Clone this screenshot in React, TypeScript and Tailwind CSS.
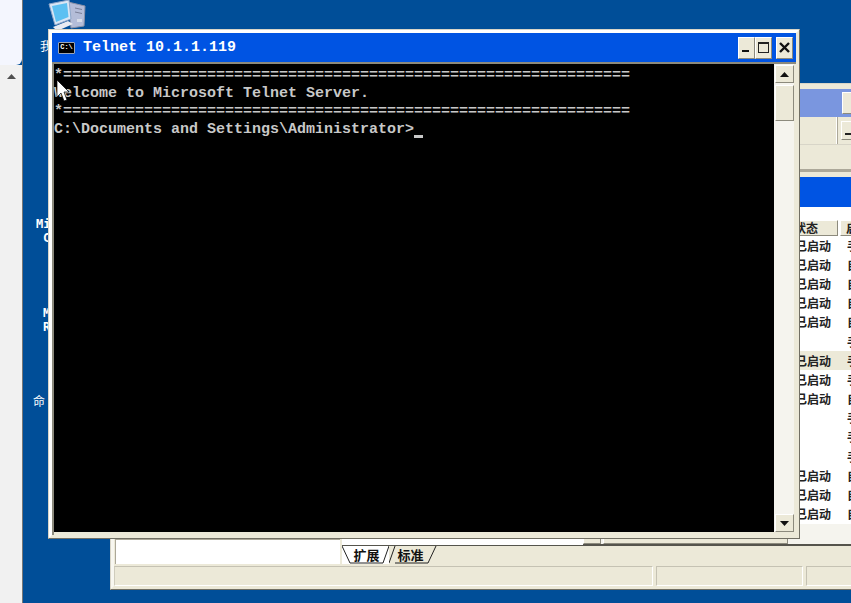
const rowsData = [
  ["已启动", "手动"],
  ["已启动", "自动"],
  ["已启动", "自动"],
  ["已启动", "自动"],
  ["已启动", "自动"],
  ["", "手动"],
  ["已启动", "手动"],
  ["已启动", "手动"],
  ["已启动", "自动"],
  ["", "手动"],
  ["", "手动"],
  ["", "手动"],
  ["已启动", "自动"],
  ["已启动", "自动"],
  ["已启动", "自动"],
];

const bevel =
  "border border-t-white border-l-white border-r-[#8c8a7d] border-b-[#8c8a7d] bg-[#ece9d8]";

function CaptionButton({ kind }: { kind: "min" | "max" | "close" }) {
  return (
    <div className={`${bevel} flex h-[22px] w-[17px] items-center justify-center`}>
      <svg width="13" height="13" viewBox="0 0 13 13">
        {kind === "min" && <rect x="2" y="9" width="7" height="2" fill="#111" />}
        {kind === "max" && (
          <path d="M1 1h11v11H1zM2 3v8h9V3z" fill="#222" fillRule="evenodd" />
        )}
        {kind === "close" && (
          <path d="M2 2l9 9M11 2l-9 9" stroke="#111" strokeWidth="2.4" fill="none" />
        )}
      </svg>
    </div>
  );
}

function ScrollButton({ up }: { up: boolean }) {
  return (
    <div className={`${bevel} flex h-[18px] w-full items-center justify-center`}>
      <svg width="9" height="5" viewBox="0 0 9 5">
        <path d={up ? "M4.5 0L9 5H0z" : "M0 0h9L4.5 5z"} fill="#111" />
      </svg>
    </div>
  );
}

function ComputerIcon() {
  return (
    <svg width="40" height="32" viewBox="0 0 40 32">
      <path d="M21 2l17 4-1 20-13 2z" fill="#b4bdd8" stroke="#8d93a8" />
      <path d="M28 8l7 1.5M28 12l7 1.5" stroke="#7a8098" />
      <rect x="30" y="19" width="5" height="3" fill="#d8dde9" />
      <path d="M2 4L22 0l2 19-16 6z" fill="#d9e6f5" stroke="#8ea6c9" />
      <path d="M5 6l15-3 1.5 14L9 22z" fill="#5cc0f2" />
      <path d="M6 27l15-6 5 3-16 7z" fill="#e8ebf2" />
    </svg>
  );
}

function TelnetWindow() {
  return (
    <div className="absolute top-[29px] left-[48px] h-[510px] w-[752px] border border-t-[#d8d5c8] border-r-[#716f64] border-b-[#716f64] border-l-[#d8d5c8]">
      <div className="flex h-full flex-col border-[3px] border-t-white border-r-[#ece9d8] border-b-[#ece9d8] border-l-white bg-[#ece9d8]">
        <div className="flex h-[29px] shrink-0 items-center bg-[#0054e3] pr-[3px] pl-[6px]">
          <div className="flex h-[12px] w-[17px] items-center justify-center rounded-[1px] border border-[#9aa5b8] bg-black font-['Liberation_Mono',monospace] text-[7px] leading-none font-bold text-white">
            C:\
          </div>
          <span className="ml-[8px] font-['Liberation_Mono',monospace] text-[15px] leading-none font-bold whitespace-pre text-white">
            Telnet 10.1.1.119
          </span>
          <div className="ml-auto flex items-center">
            <CaptionButton kind="min" />
            <CaptionButton kind="max" />
            <div className="w-[4px]" />
            <CaptionButton kind="close" />
          </div>
        </div>
        <div className="flex min-h-0 flex-1 border-t-2 border-l-2 border-t-[#8c8a7d] border-l-[#8c8a7d]">
          <div className="h-[468px] w-[720px] shrink-0 bg-black pt-[3px] font-['Liberation_Mono',monospace] text-[15px] leading-[18px] font-bold whitespace-pre text-[#c8c8c8]">
            <div>*===============================================================</div>
            <div>Welcome to Microsoft Telnet Server.</div>
            <div>*===============================================================</div>
            <div className="flex items-end">
              <span>{"C:\\Documents and Settings\\Administrator>"}</span>
              <span className="mb-[1px] h-[3px] w-[9px] bg-[#c8c8c8]" />
            </div>
          </div>
          <div className="flex h-[468px] w-[20px] flex-col bg-[#f5f4ee] pt-px pl-px">
            <ScrollButton up />
            <div className={`${bevel} mt-[2px] h-[36px] w-full`} />
            <div className="flex-1" />
            <ScrollButton up={false} />
          </div>
        </div>
      </div>
    </div>
  );
}

function ServicesWindow() {
  return (
    <div className="absolute top-[83px] left-[110px] h-[507px] w-[760px] border border-t-[#d8d5c8] border-r-[#716f64] border-b-[#716f64] border-l-[#d8d5c8]">
      <div className="flex h-full flex-col border-[3px] border-t-[5px] border-t-[#ece9d8] border-r-[#ece9d8] border-b-[#ece9d8] border-l-[#f8f7f0] bg-[#ece9d8]">
        {/* title bar, not focused */}
        <div className="flex h-[28px] shrink-0 items-center justify-start bg-[#7a96df] pl-[728px]">
          <div className={`${bevel} h-[22px] w-[18px]`} />
        </div>
        {/* menu row */}
        <div className="flex h-[28px] shrink-0 items-center border-b border-[#d8d5c8] pl-[722px]">
          <div className="h-full w-[2px] shrink-0 border-r border-[#aca899] bg-white" />
          <div className={`${bevel} ml-[3px] flex h-[19px] w-[18px] shrink-0 items-end px-[3px] pb-[4px]`}>
            <div className="h-[2px] w-full bg-[#222]" />
          </div>
        </div>
        <div className="h-[27px] shrink-0 border-b-[3px] border-[#aca899]" />
        <div className="h-[5px] shrink-0 bg-[#ece9d8]" />
        {/* body */}
        <div className="flex h-[387px] shrink-0">
          <div className="mt-[362px] ml-px h-[25px] w-[225px] shrink-0 border-t border-l border-[#aca899] bg-white" />
          <div className="flex min-w-0 flex-1 flex-col pl-[2px]">
            <div className="h-[30px] shrink-0 bg-[#0054e3]" />
            <div className="h-[13px] shrink-0 bg-white" />
            <div className="flex h-[16px] shrink-0 bg-white font-['Noto_Sans_CJK_SC',sans-serif] text-[12px] leading-[16px] text-[#222]">
              <div className="w-[450px] shrink-0" />
              <div className={`${bevel} w-[46px] shrink-0 pl-px leading-[14px]`}>状态</div>
              <div className="w-[2px] shrink-0" />
              <div className={`${bevel} w-[60px] shrink-0 pl-[5px] leading-[14px]`}>启动类型</div>
            </div>
            <div className="flex h-[288px] shrink-0 flex-col bg-white font-['Noto_Sans_CJK_SC',sans-serif] text-[12px] text-[#222]">
              {rowsData.map((row, i) => (
                <div
                  key={i}
                  className={`flex h-[19.2px] items-center ${i === 6 ? "bg-[#ece9d8]" : ""}`}
                >
                  <div className="w-[453px] shrink-0" />
                  <div className="w-[52px] shrink-0">{row[0]}</div>
                  <div className="shrink-0">{row[1]}</div>
                </div>
              ))}
            </div>
            {/* horizontal scrollbar */}
            <div className="flex h-[22px] shrink-0 border-b-2 border-[#55544c] bg-[#f5f4ee]">
              <div className="h-[21px] w-[241px] shrink-0 bg-white" />
              <div className={`${bevel} h-[20px] w-[18px] shrink-0`} />
              <div className={`${bevel} ml-[2px] h-[20px] w-[185px] shrink-0`} />
            </div>
            <div className="flex h-[18px] shrink-0 font-['Noto_Sans_CJK_SC',sans-serif] text-[13px] leading-[17px] text-[#111]">
              <div className="relative flex w-[47px] justify-center bg-white pl-[2px]">
                <svg className="absolute inset-0" width="47" height="18" viewBox="0 0 47 18">
                  <path d="M0 0l8 17h33l6-17" fill="none" stroke="#222" />
                </svg>
                <span className="relative">扩展</span>
              </div>
              <div className="relative flex w-[49px] justify-center pr-[6px]">
                <svg className="absolute inset-0" width="49" height="18" viewBox="0 0 49 18">
                  <path d="M0 17l6-17M6 17h33l8-17" fill="none" stroke="#222" />
                </svg>
                <span className="relative">标准</span>
              </div>
            </div>
          </div>
        </div>
        {/* status bar */}
        <div className="mt-[2px] flex h-[20px] shrink-0 gap-[3px]">
          <div className="w-[539px] border border-t-[#c5c2b3] border-r-white border-b-white border-l-[#cfccbc]" />
          <div className="w-[147px] border border-t-[#c5c2b3] border-r-white border-b-white border-l-[#c5c2b3]" />
          <div className="flex-1 border border-t-[#c5c2b3] border-b-white border-l-[#c5c2b3]" />
        </div>
      </div>
    </div>
  );
}

// the strip takes 23px, so the desktop is pulled back to page coords
function Desktop() {
  return (
    <div className="absolute top-0 left-[-23px] h-[603px] w-[851px] font-['DejaVu_Sans_Mono','Noto_Sans_CJK_SC',monospace] text-[12px] font-bold text-white">
      <div className="absolute top-0 left-[47px]">
        <ComputerIcon />
      </div>
      <span className="absolute top-[37px] left-[40px] font-['Noto_Sans_CJK_SC',sans-serif] font-normal">我</span>
      <span className="absolute top-[215px] left-[36px]">Mi</span>
      <span className="absolute top-[229px] left-[43px]">C</span>
      <span className="absolute top-[304px] left-[43px]">M</span>
      <span className="absolute top-[318px] left-[43px]">R</span>
      <span className="absolute top-[392px] left-[33px] font-['Noto_Sans_CJK_SC',sans-serif] font-normal">命</span>
      <ServicesWindow />
      <TelnetWindow />
      {/* mouse pointer */}
      <svg className="absolute top-[79px] left-[56px]" width="14" height="24" viewBox="0 0 14 24">
        <path d="M1 1v17l4-4 3 8 3-1-3-8h5z" fill="#fff" stroke="#000" strokeWidth="0.7" />
      </svg>
    </div>
  );
}

export default function App() {
  return (
    <div className="flex h-[603px] w-[851px] overflow-hidden bg-[#004e98]">
      {/* sidebar strip on the left */}
      <div className="flex w-[23px] shrink-0 flex-col border-r border-[#777]">
        <div className="h-[65px] rounded-br-[6px] bg-[#f4f6fe]" />
        <div className="flex flex-1 flex-col items-center bg-[#f1f1f1] pt-[9px]">
          <svg width="9" height="5" viewBox="0 0 9 5">
            <path d="M4.5 0L9 5H0z" fill="#505050" />
          </svg>
        </div>
      </div>

      <div className="relative flex-1">
        <Desktop />
      </div>
    </div>
  );
}
